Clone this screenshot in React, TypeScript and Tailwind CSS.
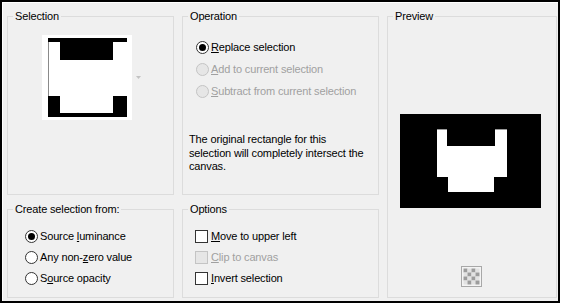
import React from "react";

// вспомогательные элементы в стиле Win10
const Group = ({
  title,
  className = "",
  children,
}: {
  title: string;
  className?: string;
  children?: React.ReactNode;
}) => (
  <fieldset
    className={`border border-[#dcdcdc] px-[5px] min-w-0 ${className}`}
  >
    <legend className="px-[2px] leading-[14px]">{title}</legend>
    {children}
  </fieldset>
);

const Radio = ({
  checked = false,
  disabled = false,
  children,
}: {
  checked?: boolean;
  disabled?: boolean;
  children: React.ReactNode;
}) => (
  <div
    className={`flex items-center gap-[2px] ${
      disabled ? "text-[#a0a0a0]" : "text-black"
    }`}
  >
    <div
      className={`w-[13px] h-[13px] rounded-full border flex items-center justify-center ${
        disabled ? "border-[#c4c4c4] bg-[#e6e6e6]" : "border-[#333333] bg-white"
      }`}
    >
      {checked && <div className="w-[7px] h-[7px] rounded-full bg-black" />}
    </div>
    <span>{children}</span>
  </div>
);

const Check = ({
  disabled = false,
  children,
}: {
  disabled?: boolean;
  children: React.ReactNode;
}) => (
  <div
    className={`flex items-center gap-[3px] h-[21px] ${
      disabled ? "text-[#a0a0a0]" : "text-black"
    }`}
  >
    <div
      className={`w-[13px] h-[13px] border ${
        disabled ? "border-[#c4c4c4] bg-[#e6e6e6]" : "border-[#333333] bg-white"
      }`}
    />
    <span>{children}</span>
  </div>
);

const Thumb = () => (
  <svg width="79" height="79" viewBox="0 0 79 79" className="block">
    <rect x="0" y="0" width="79" height="79" fill="#fff" />
    <rect x="0" y="0" width="79" height="4" fill="#000" />
    <rect x="12" y="0" width="53" height="22" fill="#000" />
    <rect x="0" y="58" width="12" height="21" fill="#000" />
    <rect x="65" y="58" width="14" height="21" fill="#000" />
    <rect x="0" y="75" width="79" height="4" fill="#000" />
    <rect x="0" y="4" width="1" height="54" fill="#8a8a8a" />
  </svg>
);

const PreviewImage = () => (
  <svg width="141" height="94" viewBox="0 0 141 94" className="block">
    <rect x="0" y="0" width="141" height="94" fill="#000" />
    <rect x="37" y="15" width="10" height="48" fill="#fff" />
    <rect x="95" y="15" width="12" height="48" fill="#fff" />
    <rect x="37" y="32" width="70" height="31" fill="#fff" />
    <rect x="48" y="32" width="46" height="46" fill="#fff" />
    <rect x="37" y="15" width="10" height="1" fill="#9a9a9a" />
    <rect x="95" y="15" width="12" height="1" fill="#9a9a9a" />
  </svg>
);

const Checker = () => {
  const cells = [];
  for (let r = 0; r < 4; r++) {
    for (let c = 0; c < 4; c++) {
      cells.push(
        <rect
          key={`${r}-${c}`}
          x={2.5 + c * 4}
          y={2.5 + r * 4}
          width="4"
          height="4"
          fill={(r + c) % 2 === 0 ? "#9c9c9c" : "#e2e2e2"}
        />
      );
    }
  }
  return (
    <svg width="21" height="21" viewBox="0 0 21 21" className="block">
      <rect x="0.5" y="0.5" width="20" height="20" fill="#f4f4f4" stroke="#a8a8a8" />
      {cells}
    </svg>
  );
};

const App = () => {
  return (
    <div
      className="w-[563px] h-[306px] bg-white text-[11px] tracking-[-0.15px] text-black"
      style={{ fontFamily: '"Liberation Sans", Arial, sans-serif' }}
    >
      <div className="w-[560px] h-[303px] border-2 border-black bg-[#f0f0f0] shadow-[inset_1px_1px_0_#ffffff] pt-[7px] pl-[5px] pr-[1px] pb-[3px] grid grid-cols-[167px_197px_170px] grid-rows-[186px_96px] gap-x-[8px] gap-y-[7px]">
        {/* Selection */}
        <Group title="Selection">
          <div className="flex items-center mt-[12px] ml-[29px]">
            <div className="w-[90px] h-[85px] bg-white pl-[6px] pt-[3px]">
              <Thumb />
            </div>
            <svg width="5" height="3" viewBox="0 0 5 3" className="ml-[4px] mt-[-1px]">
              <path d="M0 0 L5 0 L2.5 3 Z" fill="#c2c2c2" />
            </svg>
          </div>
        </Group>

        {/* Operation */}
        <Group title="Operation">
          <div className="mt-[13px] ml-[8px] flex flex-col">
            <div className="h-[22px] flex items-center">
              <Radio checked>
                <u>R</u>eplace selection
              </Radio>
            </div>
            <div className="h-[22px] flex items-center">
              <Radio disabled>
                <u>A</u>dd to current selection
              </Radio>
            </div>
            <div className="h-[22px] flex items-center">
              <Radio disabled>
                <u>S</u>ubtract from current selection
              </Radio>
            </div>
          </div>
          <p className="mt-[31px] ml-[1px] leading-[13.5px]">
            The original rectangle for this
            <br />
            selection will completely intersect the
            <br />
            canvas.
          </p>
        </Group>

        {/* Preview */}
        <Group title="Preview" className="row-span-2">
          <div className="mt-[91px] ml-[7px]">
            <PreviewImage />
          </div>
          <div className="mt-[58px] ml-[68px]">
            <Checker />
          </div>
        </Group>

        {/* Create selection from */}
        <Group title="Create selection from:">
          <div className="mt-[10px] ml-[12px] flex flex-col">
            <div className="h-[21px] flex items-center">
              <Radio checked>
                Source <u>l</u>uminance
              </Radio>
            </div>
            <div className="h-[21px] flex items-center">
              <Radio>
                Any non-<u>z</u>ero value
              </Radio>
            </div>
            <div className="h-[21px] flex items-center">
              <Radio>
                S<u>o</u>urce opacity
              </Radio>
            </div>
          </div>
        </Group>

        {/* Options */}
        <Group title="Options">
          <div className="mt-[10px] ml-[7px] flex flex-col">
            <Check>
              <u>M</u>ove to upper left
            </Check>
            <Check disabled>
              <u>C</u>lip to canvas
            </Check>
            <Check>
              <u>I</u>nvert selection
            </Check>
          </div>
        </Group>
      </div>
    </div>
  );
};

export default App;
